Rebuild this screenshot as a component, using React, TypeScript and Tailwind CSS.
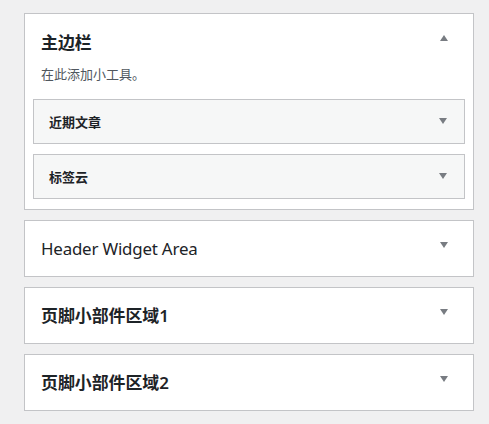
import React from "react";

const FONT = {
  fontFamily: '"Noto Sans", "Noto Sans CJK SC", sans-serif',
};

function Down() {
  return (
    <svg width="8" height="6" viewBox="0 0 8 6" className="block">
      <path d="M0 0H8L4 6Z" fill="#787c82" />
    </svg>
  );
}
function Up() {
  return (
    <svg width="8" height="6" viewBox="0 0 8 6" className="block">
      <path d="M0 6H8L4 0Z" fill="#787c82" />
    </svg>
  );
}

function Widget({ title }: { title: string }) {
  return (
    <div className="relative h-[45px] border border-[#c3c4c7] bg-[#f6f7f7] flex items-center pl-[15px]">
      <span className="text-[13px] leading-[20px] font-semibold text-[#1d2327]">{title}</span>
      <div className="absolute right-[17px] top-[18px]">
        <Down />
      </div>
    </div>
  );
}

function Panel({ title, latin }: { title: string; latin?: boolean }) {
  return (
    <div className="relative h-[57px] border border-[#c3c4c7] bg-white flex items-center pl-[16px]">
      <span
        className={
          latin
            ? "text-[16.9px] leading-[24px] font-normal tracking-[-0.2px] text-[#1d2327]"
            : "text-[16.9px] leading-[24px] font-semibold text-[#1d2327]"
        }
      >
        {title}
      </span>
      <div className="absolute right-[25px] top-[21px]">
        <Down />
      </div>
    </div>
  );
}

export default function App() {
  return (
    <div className="min-h-screen bg-[#f0f0f1] pt-[13px] pl-[24px]" style={FONT}>
      <div className="w-[450px] flex flex-col gap-[10px]">
        <div className="relative border border-[#c3c4c7] bg-white pb-[10px]">
          <div className="pt-[19px] pl-[16px]">
            <div className="text-[16.9px] leading-[20px] font-semibold text-[#1d2327]">主边栏</div>
            <div className="mt-[11px] text-[13px] leading-[20px] text-[#50575e]">在此添加小工具。</div>
          </div>
          <div className="absolute right-[25px] top-[21px]">
            <Up />
          </div>
          <div className="mt-[15px] px-[8px] flex flex-col gap-[10px]">
            <Widget title="近期文章" />
            <Widget title="标签云" />
          </div>
        </div>
        <Panel title="Header Widget Area" latin />
        <Panel title="页脚小部件区域1" />
        <Panel title="页脚小部件区域2" />
      </div>
    </div>
  );
}
